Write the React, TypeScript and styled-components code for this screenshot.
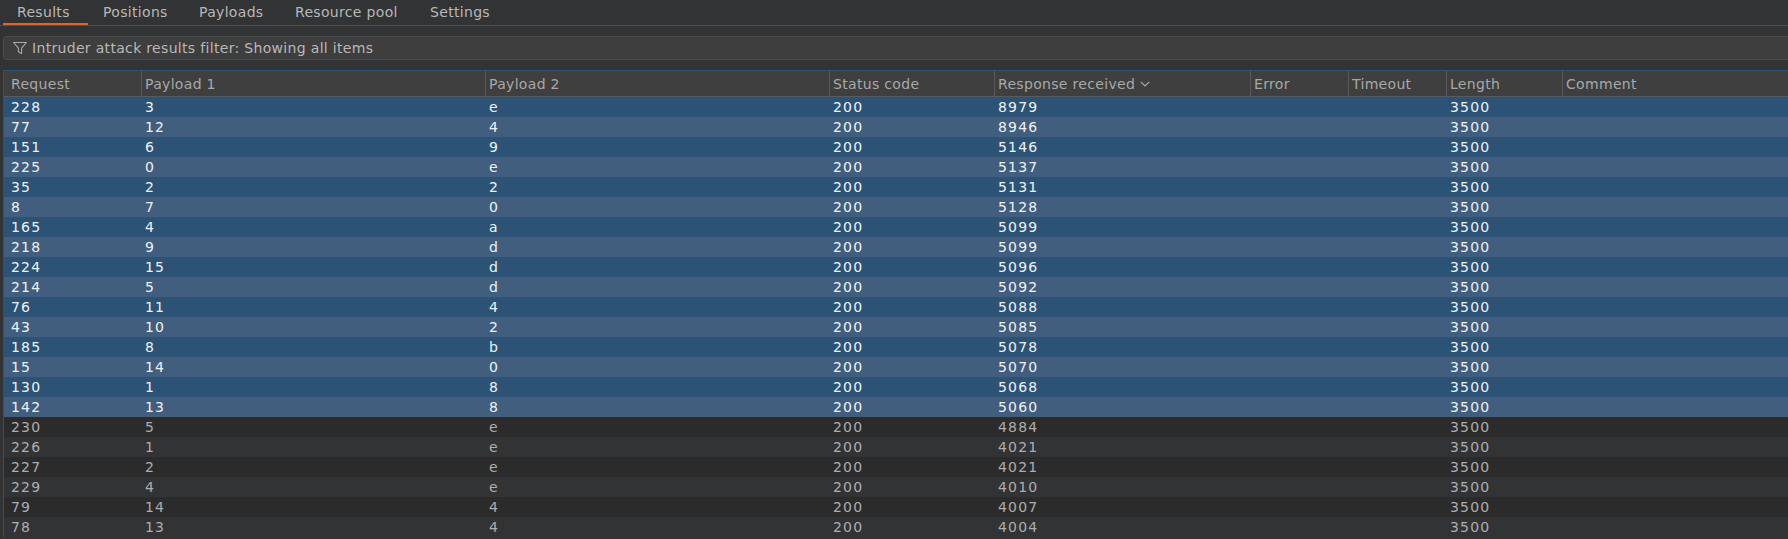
import React from "react";
import styled, { createGlobalStyle } from "styled-components";

const Global = createGlobalStyle`
  html, body { margin: 0; padding: 0; height: 100%; background: #323335; overflow: hidden; }
  #root { height: 100%; }
  * { box-sizing: border-box; }
`;

const Page = styled.div`
  width: 1788px;
  height: 539px;
  overflow: hidden;
  background: #323335;
  font-family: "DejaVu Sans", sans-serif;
  font-size: 14px;
  letter-spacing: 0.32px;
`;

const TabBar = styled.div`
  display: flex;
  height: 26px;
  padding-left: 3px;
  border-bottom: 1px solid #4e4f51;
`;

const Tab = styled.div<{ $active?: boolean; $w: number }>`
  width: ${(p) => p.$w}px;
  height: 25px;
  padding: 3px 0 0 ${(p) => (p.$active ? 14 : 15)}px;
  line-height: 18px;
  color: #b8b8b8;
  border-bottom: ${(p) => (p.$active ? "2px solid #e2622c" : "none")};
`;

const FilterBar = styled.div`
  display: flex;
  align-items: center;
  gap: 5px;
  height: 24px;
  margin: 10px 0 10px 3px;
  padding-left: 9px;
  background: #3e3e3f;
  border: 1px solid #4b4c4d;
  border-right: none;
  border-radius: 4px 0 0 4px;
  color: #b8b8b8;
`;

const Table = styled.div`
  margin-left: 3px;
  border-top: 1px solid #2d5276;
  border-left: 1px solid #2d5276;
`;

const HeaderRow = styled.div`
  display: grid;
  grid-template-columns: var(--cols);
  height: 26px;
  background: #3f3f40;
  border-bottom: 1px solid #5a5a5b;
`;

const HeaderCell = styled.div`
  display: flex;
  align-items: center;
  gap: 5px;
  padding-left: 3px;
  color: #a8a8a8;
  border-left: 1px solid #59595a;
  &:first-child { border-left: none; padding-left: 7px; }
`;

const Row = styled.div<{ $sel: boolean; $alt: boolean }>`
  display: grid;
  grid-template-columns: var(--cols);
  height: 20px;
  padding-top: 1px;
  line-height: 19px;
  letter-spacing: 1.2px;
  background: ${(p) =>
    p.$sel ? (p.$alt ? "#425e7e" : "#2c5276") : p.$alt ? "#323335" : "#2b2b2b"};
  color: ${(p) => (p.$sel ? "#eef2f6" : "#adadad")};
`;

const Cell = styled.div`
  padding-left: 4px;
  white-space: nowrap;
  overflow: hidden;
  &:first-child { padding-left: 7px; }
`;

const Grid = styled.div`
  --cols: 137px 344px 344px 165px 256px 98px 98px 116px 1fr;
`;

const tabs: [string, number][] = [
  ["Results", 85],
  ["Positions", 96],
  ["Payloads", 96],
  ["Resource pool", 135],
  ["Settings", 100],
];

const headers = ["Request", "Payload 1", "Payload 2", "Status code", "Response received", "Error", "Timeout", "Length", "Comment"];

const rows: [number, number, string, number][] = [
  [228, 3, "e", 8979], [77, 12, "4", 8946], [151, 6, "9", 5146], [225, 0, "e", 5137],
  [35, 2, "2", 5131], [8, 7, "0", 5128], [165, 4, "a", 5099], [218, 9, "d", 5099],
  [224, 15, "d", 5096], [214, 5, "d", 5092], [76, 11, "4", 5088], [43, 10, "2", 5085],
  [185, 8, "b", 5078], [15, 14, "0", 5070], [130, 1, "8", 5068], [142, 13, "8", 5060],
  [230, 5, "e", 4884], [226, 1, "e", 4021], [227, 2, "e", 4021], [229, 4, "e", 4010],
  [79, 14, "4", 4007], [78, 13, "4", 4004],
];

const FilterIcon = () => (
  <svg width="14" height="14" viewBox="0 0 14 14" fill="none" stroke="#a9a9a9" strokeWidth="1.1">
    <path d="M.6 1.5h12.8L8.6 7.2v5.4L5.4 10.8V7.2z" strokeLinejoin="round" />
  </svg>
);

const Chevron = () => (
  <svg width="10" height="6" viewBox="0 0 10 6" fill="none" stroke="#adadad" strokeWidth="1.1">
    <path d="M.8.8L5 5l4.2-4.2" />
  </svg>
);

export default function App() {
  return (
    <Page>
      <Global />
      <TabBar>
        {tabs.map(([t, w], i) => (
          <Tab key={t} $w={w} $active={i === 0}>{t}</Tab>
        ))}
      </TabBar>
      <FilterBar>
        <FilterIcon />
        <span>Intruder attack results filter: Showing all items</span>
      </FilterBar>
      <Table>
        <Grid>
          <HeaderRow>
            {headers.map((h) => (
              <HeaderCell key={h}>
                {h}
                {h === "Response received" && <Chevron />}
              </HeaderCell>
            ))}
          </HeaderRow>
          {rows.map((r, i) => (
            <Row key={r[0]} $sel={i < 16} $alt={i % 2 === 1}>
              <Cell>{r[0]}</Cell>
              <Cell>{r[1]}</Cell>
              <Cell>{r[2]}</Cell>
              <Cell>200</Cell>
              <Cell>{r[3]}</Cell>
              <Cell />
              <Cell />
              <Cell>3500</Cell>
              <Cell />
            </Row>
          ))}
        </Grid>
      </Table>
    </Page>
  );
}
